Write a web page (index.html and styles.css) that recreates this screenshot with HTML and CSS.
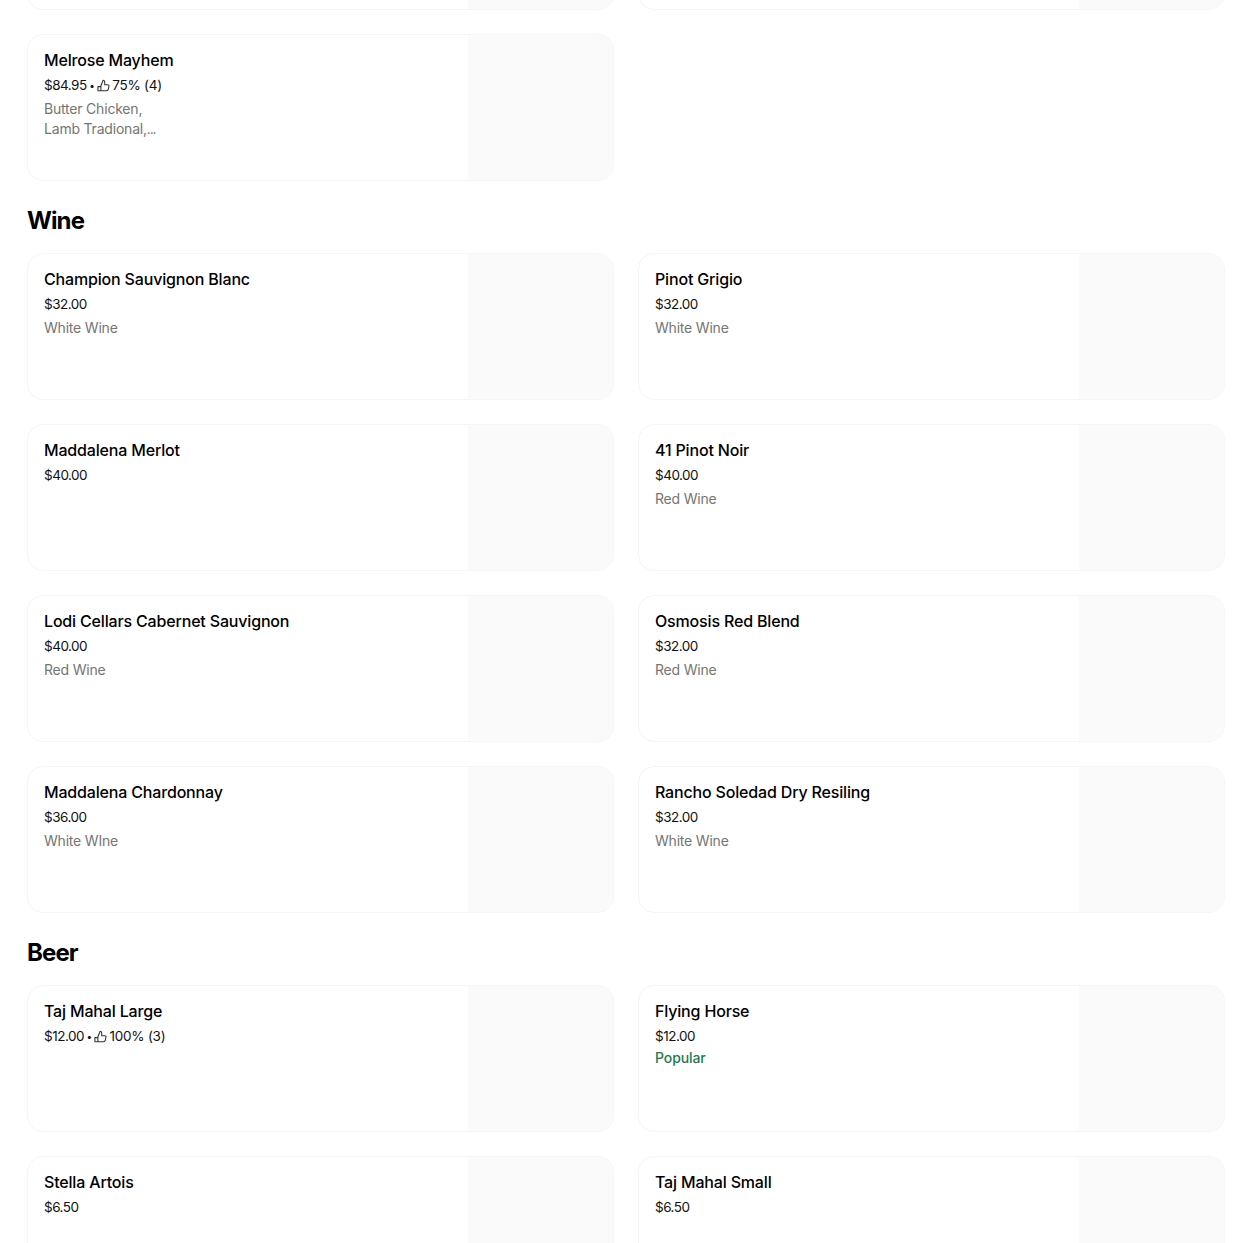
FILE: index.html
```html
<!doctype html>
<html lang="en">
  <head>
    <meta charset="UTF-8" />
    <meta name="viewport" content="width=device-width, initial-scale=1.0" />
    <title>Menu</title>
    <link rel="stylesheet" href="styles.css">
  </head>
  <body>
    <svg class="icon-defs" width="0" height="0" aria-hidden="true">
      <symbol id="thumb" viewBox="0 0 14 14">
        <path d="M4.2 7.2 6.6 1.4c1 0 1.7.8 1.7 1.8v2.9h3.3c.9 0 1.5.8 1.3 1.6l-.7 3.2c-.2 1-1.1 1.7-2.1 1.7H4.2z M1 8.2h3.2v4.4H1z" fill="none" stroke="currentColor" stroke-width="1.15" stroke-linejoin="round" />
      </symbol>
    </svg>
    <main class="menu">
      <section class="menu-section">
        <div class="item-grid">
          <article class="item"><div class="item-info"></div><div class="item-image"></div></article>
          <article class="item"><div class="item-info"></div><div class="item-image"></div></article>
          <article class="item">
            <div class="item-info">
              <h3>Melrose Mayhem</h3>
              <p class="price">$84.95 <span class="dot">•</span> <svg class="thumb"><use href="#thumb" /></svg> <span class="rating">75% (4)</span></p>
              <p class="desc desc-narrow">Butter Chicken, Lamb Tradional,<span class="dots">...</span></p>
            </div>
            <div class="item-image"></div>
          </article>
        </div>
      </section>

      <section class="menu-section">
        <h2>Wine</h2>
        <div class="item-grid">
          <article class="item">
            <div class="item-info">
              <h3>Champion Sauvignon Blanc</h3>
              <p class="price">$32.00</p>
              <p class="desc">White Wine</p>
            </div>
            <div class="item-image"></div>
          </article>
          <article class="item">
            <div class="item-info">
              <h3>Pinot Grigio</h3>
              <p class="price">$32.00</p>
              <p class="desc">White Wine</p>
            </div>
            <div class="item-image"></div>
          </article>
          <article class="item">
            <div class="item-info">
              <h3>Maddalena Merlot</h3>
              <p class="price">$40.00</p>
            </div>
            <div class="item-image"></div>
          </article>
          <article class="item">
            <div class="item-info">
              <h3>41 Pinot Noir</h3>
              <p class="price">$40.00</p>
              <p class="desc">Red Wine</p>
            </div>
            <div class="item-image"></div>
          </article>
          <article class="item">
            <div class="item-info">
              <h3>Lodi Cellars Cabernet Sauvignon</h3>
              <p class="price">$40.00</p>
              <p class="desc">Red Wine</p>
            </div>
            <div class="item-image"></div>
          </article>
          <article class="item">
            <div class="item-info">
              <h3>Osmosis Red Blend</h3>
              <p class="price">$32.00</p>
              <p class="desc">Red Wine</p>
            </div>
            <div class="item-image"></div>
          </article>
          <article class="item">
            <div class="item-info">
              <h3>Maddalena Chardonnay</h3>
              <p class="price">$36.00</p>
              <p class="desc">White WIne</p>
            </div>
            <div class="item-image"></div>
          </article>
          <article class="item">
            <div class="item-info">
              <h3>Rancho Soledad Dry Resiling</h3>
              <p class="price">$32.00</p>
              <p class="desc">White Wine</p>
            </div>
            <div class="item-image"></div>
          </article>
        </div>
      </section>

      <section class="menu-section">
        <h2>Beer</h2>
        <div class="item-grid">
          <article class="item">
            <div class="item-info">
              <h3>Taj Mahal Large</h3>
              <p class="price">$12.00 <span class="dot">•</span> <svg class="thumb"><use href="#thumb" /></svg> <span class="rating">100% (3)</span></p>
            </div>
            <div class="item-image"></div>
          </article>
          <article class="item">
            <div class="item-info">
              <h3>Flying Horse</h3>
              <p class="price">$12.00</p>
              <p class="popular">Popular</p>
            </div>
            <div class="item-image"></div>
          </article>
          <article class="item">
            <div class="item-info">
              <h3>Stella Artois</h3>
              <p class="price">$6.50</p>
            </div>
            <div class="item-image"></div>
          </article>
          <article class="item">
            <div class="item-info">
              <h3>Taj Mahal Small</h3>
              <p class="price">$6.50</p>
            </div>
            <div class="item-image"></div>
          </article>
        </div>
      </section>
    </main>
  </body>
</html>
```

FILE: styles.css
```css
html,
body {
  height: 100%;
  overflow: hidden;
}
body {
  margin: 0;
  background-color: #fff;
  color: #000;
  font-family: Inter, "Liberation Sans", sans-serif;
}
.icon-defs {
  display: block;
}
/* page is scrolled, first row is cut off at the top */
.menu {
  margin-top: -137px;
  padding: 0 25px 0 27px;
}
.menu-section h2 {
  margin: 24px 0 16px;
  font-size: 24px;
  line-height: 32px;
  font-weight: 700;
  letter-spacing: -0.9px;
}
.item-grid {
  display: grid;
  grid-template-columns: 1fr 1fr;
  gap: 24px;
}
.item {
  display: flex;
  height: 147px;
  box-sizing: border-box;
  border: 1px solid #f5f5f5;
  border-radius: 16px;
  overflow: hidden;
  background-color: white;
}
.item-info {
  flex: 1;
  padding: 15px 16px;
}
.item-image {
  width: 145px;
  background-color: #fafafa;
}
.item h3 {
  margin: 0;
  font-size: 16px;
  line-height: 20px;
  font-weight: 500;
  letter-spacing: -0.17px;
}
.price {
  display: flex;
  align-items: center;
  gap: 2.5px;
  margin: 5px 0 0;
  font-size: 13.5px;
  line-height: 20px;
  letter-spacing: -0.5px;
  color: #111;
}
.dot {
  font-size: 10px;
}
.thumb {
  width: 13px;
  height: 13px;
  color: #333;
}
.rating {
  letter-spacing: -0.25px;
}
.desc {
  margin: 4px 0 0;
  font-size: 14px;
  line-height: 20px;
  letter-spacing: -0.2px;
  color: #757575;
}
.desc-narrow {
  max-width: 125px;
}
.dots {
  letter-spacing: -1.2px;
}
.popular {
  margin: 2px 0 0;
  font-size: 14px;
  line-height: 20px;
  font-weight: 500;
  letter-spacing: -0.1px;
  color: #1c7a50;
}
```
